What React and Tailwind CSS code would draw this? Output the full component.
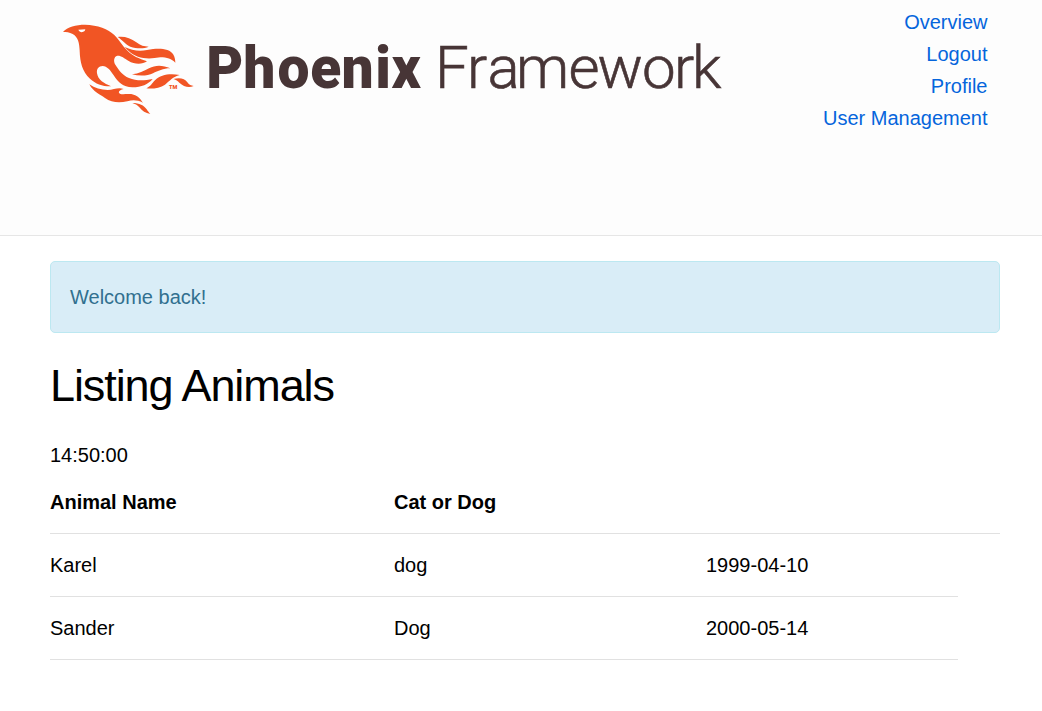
const links = ["Overview", "Logout", "Profile", "User Management"];
const animals = [
  { name: "Karel", kind: "dog", born: "1999-04-10" },
  { name: "Sander", kind: "Dog", born: "2000-05-14" },
];

function Bird() {
  return (
    <svg className="mt-[15px] h-[105px] w-[145px] shrink-0" viewBox="0 0 435 315" fill="#f15524" aria-hidden="true">
      <path
        fillRule="evenodd"
        d="M24 51C37 36 63 29 90 29C128 30 160 42 178 60C194 76 202 92 216 106C232 123 252 131 276 139C263 149 238 149 221 138C207 129 198 121 187 122C176 125 175 139 181 149C192 166 202 180 222 189C244 198 267 197 293 192C279 208 260 217 232 217C204 217 189 201 176 181C166 165 156 154 143 153C131 153 124 162 126 175C129 195 147 205 168 214C145 215 122 207 105 191C82 169 75 142 74 107C73 86 70 66 53 57C43 52 34 51 24 51ZM70 44C73 52 82 54 89 48L91 43Z"
      />
      <path d="M188 66C207 63 227 69 244 82C256 92 268 95 281 95C267 101 246 101 226 95C211 89 204 76 188 66Z" />
      <path d="M209 96C230 106 252 110 276 105C299 101 318 99 337 105C354 111 361 125 361 143C350 132 336 127 316 127C291 131 269 132 249 125C231 119 220 108 209 96Z" />
      <path d="M231 178C252 176 266 169 282 160C302 149 323 150 346 160C324 160 309 168 294 175C278 183 253 184 231 178Z" />
      <path d="M274 220C287 214 291 205 300 196C317 179 343 175 374 180C354 185 344 198 330 209C315 219 294 222 274 220Z" />
      <path d="M355 192C376 187 389 191 397 202C403 210 408 212 416 213C401 219 386 215 373 203C367 197 361 194 355 192Z" />
      <path d="M103 208C119 219 138 225 158 225C177 225 188 216 206 222C198 224 190 228 192 233C196 243 217 234 236 239C249 242 256 252 264 263C247 255 234 254 217 259C193 264 169 263 150 249C134 238 115 231 103 208Z" />
      <path d="M232 264C253 264 267 271 275 283C279 289 282 293 286 297C271 295 262 288 253 277C247 270 240 266 232 264Z" />
      <text x="342" y="221" textLength="25" lengthAdjust="spacingAndGlyphs" className="font-['Roboto',sans-serif] text-[17px] font-black">TM</text>
    </svg>
  );
}

function Wordmark() {
  return (
    <svg className="h-[130px] w-[530px] shrink-0 font-['Roboto',sans-serif] text-[60px]" viewBox="200 0 530 130" fill="#473536">
      <g transform="translate(200 0) scale(0.95 1)">
        <text y="88" x="6.5 45.5 81.5 116 149 184.5 201.5" className="font-black">Phoenix</text>
      </g>
      <text y="88" x="435 467 487.5 516 568.5 597.5 642 674 692" stroke="#473536" strokeWidth="0.6" className="font-light">Framework</text>
    </svg>
  );
}

export default function App() {
  return (
    <div className="min-h-[711px] bg-white font-['Liberation_Sans',Arial,sans-serif] text-[20px] leading-[32px] text-black">
      <header className="flex h-[236px] items-start border-b border-[#e6e6e6] bg-[#fdfdfd] pr-[54.5px] pl-[55px]">
        <Bird />
        <Wordmark />
        <nav className="ml-auto pt-[6px]">
          <ul className="text-right text-[#0565dc]">
            {links.map((label) => (
              <li key={label}><a href="#">{label}</a></li>
            ))}
          </ul>
        </nav>
      </header>
      <main className="pt-[25px] pr-[42px] pl-[50px]">
        <p className="rounded-[5px] border border-[#bce8f1] bg-[#d9edf7] px-[19px] py-[19px] text-[#31708f]">Welcome back!</p>
        <h1 className="mt-[26px] mb-[26px] text-[45px] leading-[54px] tracking-[-1.08px]">Listing Animals</h1>
        <p>14:50:00</p>
        <table className="w-full table-fixed border-separate border-spacing-0 text-left">
          <colgroup>
            <col className="w-[344px]" />
            <col className="w-[312px]" />
            <col className="w-[252px]" />
            <col />
          </colgroup>
          <thead>
            <tr>
              <th className="border-b border-[#e1e1e1] py-[15px] font-bold">Animal Name</th>
              <th className="border-b border-[#e1e1e1] py-[15px] font-bold">Cat or Dog</th>
              <th className="border-b border-[#e1e1e1]"></th>
              <th className="border-b border-[#e1e1e1]"></th>
            </tr>
          </thead>
          <tbody>
            {animals.map((a) => (
              <tr key={a.name}>
                <td className="border-b border-[#e1e1e1] py-[15px]">{a.name}</td>
                <td className="border-b border-[#e1e1e1] py-[15px]">{a.kind}</td>
                <td className="border-b border-[#e1e1e1] py-[15px]">{a.born}</td>
              </tr>
            ))}
          </tbody>
        </table>
      </main>
    </div>
  );
}
